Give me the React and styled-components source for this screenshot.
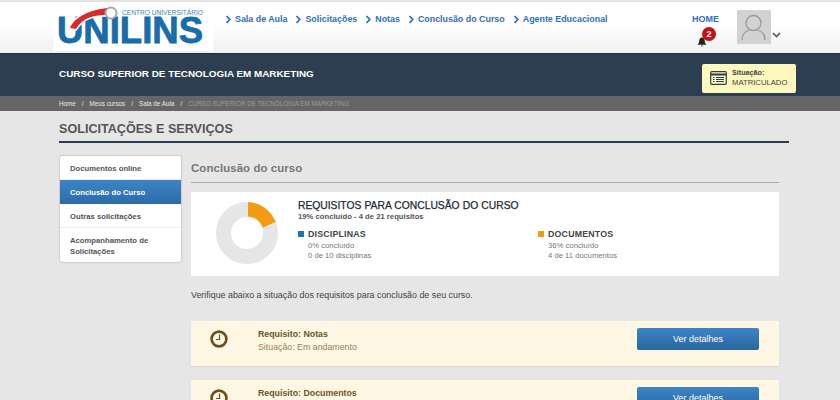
import React from "react";
import styled, { createGlobalStyle } from "styled-components";

const GlobalStyle = createGlobalStyle`
  html, body { margin: 0; padding: 0; background: #e6e6e6; }
  body { font-family: "Liberation Sans", Arial, sans-serif; }
  * { box-sizing: border-box; }
`;

const Page = styled.div`
  width: 840px;
  height: 400px;
  overflow: hidden;
  background: #e6e6e6;
`;

const TopBar = styled.header`
  height: 54px;
  border-top: 2px solid #e2e2e2;
  border-bottom: 1px solid #1f2d3d;
  background: linear-gradient(#ffffff 40%, #f1f1f1);
  display: flex;
  padding-left: 53px;
`;

const LogoBox = styled.div`
  width: 160px;
  height: 49px;
  background: #fff;
  flex: none;
`;

const Nav = styled.nav`
  display: flex;
  gap: 8px;
  margin-left: 12px;
  padding-top: 10px;
  height: 28px;
  width: 384px;
  flex: none;
`;

const NavLink = styled.a`
  display: flex;
  align-items: center;
  gap: 3px;
  height: 14px;
  font-size: 8.9px;
  font-weight: bold;
  color: #2f6fc0;
  white-space: nowrap;
  svg { flex: none; }
`;

const HomeArea = styled.div`
  margin-left: 83px;
  width: 45px;
  padding-top: 10px;
  position: relative;
  flex: none;
`;

const HomeLabel = styled.div`
  font-size: 9px;
  font-weight: bold;
  line-height: 14px;
  color: #2f6fc0;
`;

const BellWrap = styled.div`
  margin: 11px 0 0 5px;
  width: 10px;
  height: 10px;
  color: #222;
  svg { display: block; }
`;

const Badge = styled.span`
  position: absolute;
  left: 10px;
  top: 25px;
  width: 14px;
  height: 14px;
  border-radius: 50%;
  background: #c8101a;
  color: #fff;
  font-size: 9px;
  font-weight: bold;
  line-height: 14px;
  text-align: center;
`;

const Avatar = styled.div`
  width: 34px;
  height: 34px;
  margin-top: 8px;
  background: #d2d2d2;
  border-radius: 1px;
  flex: none;
`;

const AvatarChevron = styled.div`
  margin: 22px 0 0 1px;
  width: 9px;
`;

const CourseBand = styled.section`
  height: 42px;
  background: #2c3e50;
  display: flex;
  align-items: center;
  justify-content: space-between;
  padding: 0 44px 0 59px;
`;

const CourseTitle = styled.h1`
  margin: 0 0 4px;
  font-size: 9.9px;
  font-weight: bold;
  color: #fff;
`;

const StatusCard = styled.div`
  width: 94px;
  height: 29px;
  background: #fdf8bd;
  border-radius: 2px;
  display: flex;
  align-items: center;
  gap: 5px;
  padding-left: 8px;
  margin-bottom: -6px;
  color: #333;
`;

const StatusLabel = styled.div`
  font-size: 7.2px;
  font-weight: bold;
  line-height: 9px;
  color: #444;
`;

const StatusValue = styled.div`
  font-size: 7.7px;
  line-height: 11px;
  color: #444;
`;

const Crumbs = styled.div`
  height: 15px;
  background: #666;
  padding-left: 59px;
  display: flex;
  align-items: center;
  gap: 6px;
  font-size: 6.3px;
  color: #e8e8e8;
`;

const CrumbCurrent = styled.span`
  color: #999;
`;

const Content = styled.main`
  padding: 9px 51px 0 59px;
`;

const SectionTitle = styled.h2`
  margin: 0;
  height: 23px;
  padding-top: 1px;
  font-size: 12.6px;
  line-height: 16px;
  font-weight: bold;
  color: #555;
  border-bottom: 2px solid #2c3e50;
`;

const Columns = styled.div`
  display: flex;
  gap: 10px;
  margin-top: 13px;
  padding-left: 1px;
`;

const SideMenu = styled.ul`
  list-style: none;
  margin: 0;
  padding: 0;
  width: 121px;
  height: 106px;
  background: #fff;
  border-radius: 2px;
  box-shadow: 0 0 2px rgba(0, 0, 0, 0.35);
  flex: none;
  align-self: flex-start;
`;

const SideItem = styled.li`
  font-size: 7.7px;
  font-weight: bold;
  line-height: 11px;
  padding: 7px 10px 6px;
  height: ${(p) => (p.$tall ? "35px" : "24px")};
  color: ${(p) => (p.$active ? "#fff" : "#555")};
  background: ${(p) => (p.$active ? "linear-gradient(#3d84c6, #2b6ca8)" : "transparent")};
  border-bottom: ${(p) => (p.$last || p.$active ? "none" : "1px solid #eee")};
`;

const Main = styled.div`
  width: 588px;
  flex: none;
`;

const MainTitle = styled.h3`
  margin: 0;
  height: 27px;
  font-size: 11.4px;
  line-height: 25px;
  font-weight: bold;
  letter-spacing: 0.1px;
  color: #777;
  border-bottom: 1px solid #aaa;
`;

const SummaryCard = styled.div`
  margin-top: 9px;
  height: 84px;
  background: #fff;
  display: flex;
  padding: 7px 0 0 25px;
`;

const Donut = styled.div`
  width: 62px;
  height: 62px;
  margin-top: 3px;
  flex: none;
  svg { display: block; }
`;

const SummaryBody = styled.div`
  margin-left: 20px;
  flex: 1;
`;

const SummaryTitle = styled.div`
  font-size: 10.3px;
  -webkit-text-stroke: 0.25px #1d2a36;
  word-spacing: 0.3px;
  line-height: 13px;
  color: #1d2a36;
`;

const SummarySub = styled.div`
  font-size: 7.7px;
  font-weight: bold;
  line-height: 10px;
  color: #555;
`;

const Groups = styled.div`
  display: grid;
  grid-template-columns: 240px 1fr;
  margin-top: 6px;
`;

const GroupHead = styled.div`
  display: flex;
  align-items: center;
  gap: 4px;
  font-size: 8.8px;
  font-weight: bold;
  letter-spacing: 0.2px;
  line-height: 12px;
  color: #444;
`;

const Square = styled.span`
  width: 6px;
  height: 6px;
  background: ${(p) => p.$color};
`;

const GroupLine = styled.div`
  font-size: 7.7px;
  line-height: 10.3px;
  padding-left: 10px;
  color: #777;
  &:nth-child(2) { margin-top: 1px; }
`;

const Hint = styled.p`
  margin: 14px 0 0;
  font-size: 8.9px;
  line-height: 11px;
  color: #444;
`;

const Requirement = styled.div`
  margin-top: ${(p) => p.$mt}px;
  height: 45px;
  background: #fdf7e3;
  box-shadow: 0 1px 1px rgba(0, 0, 0, 0.06);
  display: flex;
  padding-top: 7px;
`;

const ClockSlot = styled.div`
  width: 67px;
  padding: 2px 0 0 19px;
  flex: none;
  svg { display: block; }
`;

const ReqText = styled.div`
  width: 379px;
  flex: none;
`;

const ReqTitle = styled.div`
  font-size: 8.8px;
  font-weight: bold;
  line-height: 12px;
  color: #6d5524;
`;

const ReqState = styled.div`
  font-size: 8.8px;
  line-height: 14px;
  color: #97825a;
`;

const DetailButton = styled.button`
  width: 122px;
  height: 22px;
  border: 0;
  border-radius: 2px;
  background: linear-gradient(#3d84c6, #2a689f);
  color: #fff;
  font-family: inherit;
  font-size: 9px;
  padding: 0;
`;

const Chevron = () => (
  <svg width="7" height="9" viewBox="0 0 7 9" fill="none" stroke="#2f6fc0" strokeWidth="1.8">
    <path d="M1.5 1l3.2 3.5L1.5 8" />
  </svg>
);

const Clock = () => (
  <svg width="18" height="18" viewBox="0 0 18 18" fill="none" stroke="#6b4f1d">
    <circle cx="9" cy="9" r="7.4" strokeWidth="2.6" />
    <path d="M9.500 4.500v5H6" strokeWidth="1.2" />
  </svg>
);

const navItems = ["Sala de Aula", "Solicitações", "Notas", "Conclusão do Curso", "Agente Educacional"];
const requirements = [
  { title: "Requisito: Notas", state: "Situação: Em andamento", mt: 20 },
  { title: "Requisito: Documentos", state: "Situação: Em andamento", mt: 14 },
];

export default function App() {
  return (
    <Page>
      <GlobalStyle />
      <TopBar>
        <LogoBox>
          <svg width="160" height="49" viewBox="0 0 160 49">
            <text x="4" y="41" fontFamily="Liberation Sans" fontWeight="bold" fontSize="36" fill="#176ea8" stroke="#176ea8" strokeWidth="0.8" textLength="146" lengthAdjust="spacingAndGlyphs">UNILINS</text>
            <path d="M17 26C22 14 38 8 54 6L54 13C42 13 30 15 23 27z" fill="#fff" stroke="#fff" strokeWidth="3" />
            <path d="M17 26C22 14 38 8 54 6L54 13C42 13 30 15 23 27z" fill="#d92a2a" />
            <circle cx="58" cy="11" r="5.5" fill="#fff" stroke="#aaa" strokeWidth="2" />
            <text x="69" y="13" fontFamily="Liberation Sans" fontSize="7.5" fill="#3a86b8" textLength="81" lengthAdjust="spacingAndGlyphs">CENTRO UNIVERSITÁRIO</text>
          </svg>
        </LogoBox>
        <Nav>
          {navItems.map((item) => (
            <NavLink key={item}>
              <Chevron />
              {item}
            </NavLink>
          ))}
        </Nav>
        <HomeArea>
          <HomeLabel>HOME</HomeLabel>
          <BellWrap>
            <svg width="10" height="10" viewBox="0 0 10 11" fill="currentColor">
              <path d="M5 0.500C3 0.500 2 2 2 4c0 2-1 3.500-2 4.500h10c-1-1-2-2.500-2-4.500 0-2-1-3.500-3-3.500zM3.800 9.300h2.400a1.200 1.200 0 0 1-2.400 0z" />
            </svg>
          </BellWrap>
          <Badge>2</Badge>
        </HomeArea>
        <Avatar>
          <svg width="34" height="34" viewBox="0 0 34 34" fill="none" stroke="#999" strokeWidth="1.3">
            <circle cx="16.500" cy="13" r="7.500" />
            <path d="M5 30c0-6 4-9 7.500-10M28 30c0-6-4-9-7.500-10" />
          </svg>
        </Avatar>
        <AvatarChevron>
          <svg width="9" height="6" viewBox="0 0 9 6" fill="none" stroke="#555" strokeWidth="1.6">
            <path d="M1 1l3.500 3.500L8 1" />
          </svg>
        </AvatarChevron>
      </TopBar>

      <CourseBand>
        <CourseTitle>CURSO SUPERIOR DE TECNOLOGIA EM MARKETING</CourseTitle>
        <StatusCard>
          <svg width="17" height="14" viewBox="0 0 17 14" fill="none" stroke="#2c3e50">
            <rect x="0.700" y="0.700" width="15.600" height="12.600" rx="1" strokeWidth="1.2" />
            <path d="M1 3.500h15" strokeWidth="2" />
            <path d="M3 6.500h1.500M6 6.500h8M3 8.500h1.500M6 8.500h8M3 10.500h1.500M6 10.500h8" strokeWidth="1" />
          </svg>
          <div>
            <StatusLabel>Situação:</StatusLabel>
            <StatusValue>MATRICULADO</StatusValue>
          </div>
        </StatusCard>
      </CourseBand>

      <Crumbs>
        <span>Home</span>
        <span>/</span>
        <span>Meus cursos</span>
        <span>/</span>
        <span>Sala de Aula</span>
        <span>/</span>
        <CrumbCurrent>CURSO SUPERIOR DE TECNOLOGIA EM MARKETING</CrumbCurrent>
      </Crumbs>

      <Content>
        <SectionTitle>SOLICITAÇÕES E SERVIÇOS</SectionTitle>
        <Columns>
          <SideMenu>
            <SideItem>Documentos online</SideItem>
            <SideItem $active>Conclusão do Curso</SideItem>
            <SideItem>Outras solicitações</SideItem>
            <SideItem $tall $last>Acompanhamento de Solicitações</SideItem>
          </SideMenu>
          <Main>
            <MainTitle>Conclusão do curso</MainTitle>
            <SummaryCard>
              <Donut>
                <svg width="62" height="62" viewBox="0 0 62 62">
                  <circle cx="31" cy="31" r="23.5" fill="none" stroke="#e6e6e6" strokeWidth="15" />
                  <path d="M32 0A31 31 0 0 1 59.500 20L47 25.500A16.500 16.500 0 0 0 32 14.500z" fill="#f39c12" />
                </svg>
              </Donut>
              <SummaryBody>
                <SummaryTitle>REQUISITOS PARA CONCLUSÃO DO CURSO</SummaryTitle>
                <SummarySub>19% concluído - 4 de 21 requisitos</SummarySub>
                <Groups>
                  <div>
                    <GroupHead><Square $color="#1f74b8" />DISCIPLINAS</GroupHead>
                    <GroupLine>0% concluído</GroupLine>
                    <GroupLine>0 de 10 disciplinas</GroupLine>
                  </div>
                  <div>
                    <GroupHead><Square $color="#f39c12" />DOCUMENTOS</GroupHead>
                    <GroupLine>36% concluído</GroupLine>
                    <GroupLine>4 de 11 documentos</GroupLine>
                  </div>
                </Groups>
              </SummaryBody>
            </SummaryCard>
            <Hint>Verifique abaixo a situação dos requisitos para conclusão de seu curso.</Hint>
            {requirements.map((req) => (
              <Requirement key={req.title} $mt={req.mt}>
                <ClockSlot><Clock /></ClockSlot>
                <ReqText>
                  <ReqTitle>{req.title}</ReqTitle>
                  <ReqState>{req.state}</ReqState>
                </ReqText>
                <DetailButton>Ver detalhes</DetailButton>
              </Requirement>
            ))}
          </Main>
        </Columns>
      </Content>
    </Page>
  );
}
